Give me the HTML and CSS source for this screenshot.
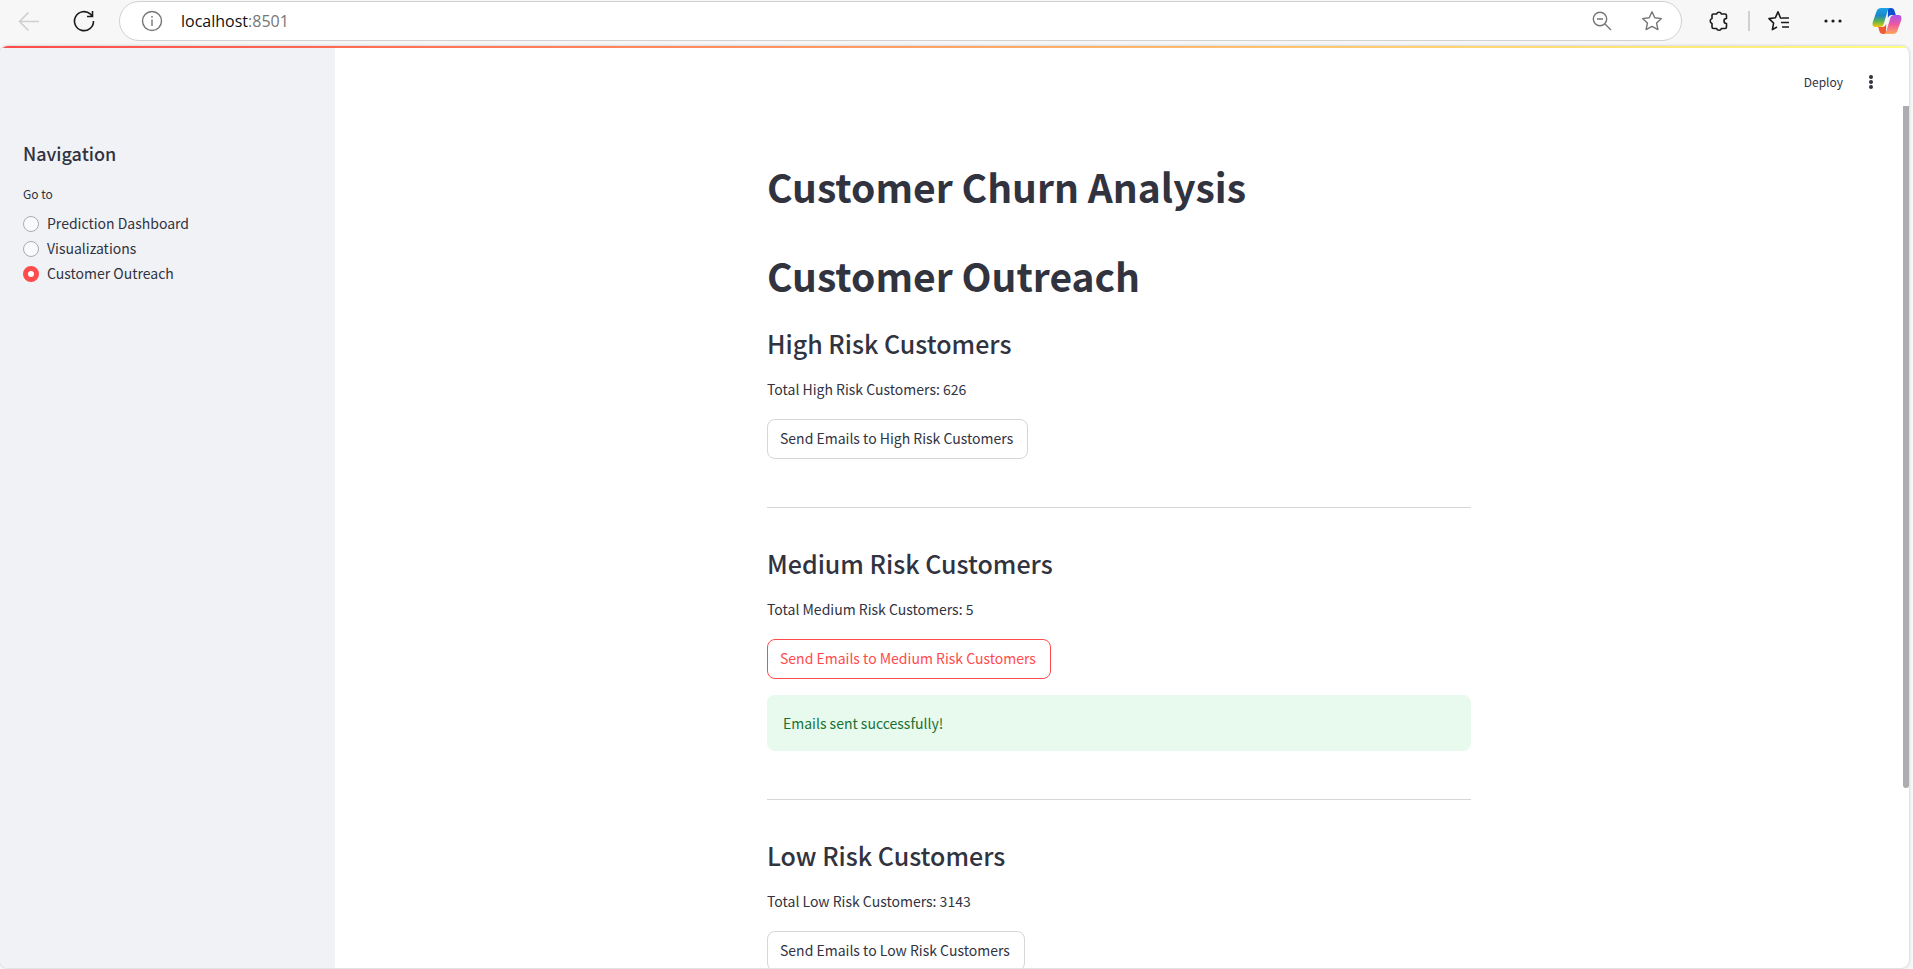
FILE: index.html
```html
<!DOCTYPE html>
<html lang="en">
<head>
<meta charset="utf-8">
<title>Customer Churn Analysis</title>
<link rel="stylesheet" href="styles.css">
</head>
<body>
<header class="toolbar">
  <button class="tool tool-back" aria-label="Back" disabled>
    <svg width="22" height="22" viewBox="0 0 22 22"><path d="M21 11.500H1.500M10.500 2.500l-9 9 9 9"/></svg>
  </button>
  <button class="tool tool-reload" aria-label="Refresh">
    <svg width="22" height="22" viewBox="0 0 22 22"><path d="M20.500 11A9.500 9.500 0 1 1 17.500 4.200L19.500 6.300M19.500 1v5.500H14"/></svg>
  </button>
  <div class="address">
    <button class="tool tool-muted" aria-label="Site information">
      <svg width="22" height="22" viewBox="0 0 22 22"><circle cx="11" cy="11" r="9.500"/><path d="M11 9.500V16M11 6v1.800"/></svg>
    </button>
    <div class="url"><span class="url-host">localhost</span>:8501</div>
    <button class="tool tool-muted" aria-label="Zoom out">
      <svg width="22" height="22" viewBox="0 0 22 22"><circle cx="9" cy="9" r="6.700"/><path d="M6 9h6M14 14l6 6"/></svg>
    </button>
    <button class="tool tool-muted" aria-label="Add to favorites">
      <svg width="22" height="22" viewBox="0 0 22 22"><path stroke-linejoin="round" d="M11 1.800l2.800 6 6.600.8-4.800 4.500 1.300 6.500L11 16.400l-5.900 3.200 1.300-6.500L1.600 8.600l6.600-.8z"/></svg>
    </button>
  </div>
  <div class="actions">
    <button class="tool" aria-label="Extensions">
      <svg width="22" height="22" viewBox="0 0 22 22"><path stroke-linejoin="round" d="M5.500 4H8.600a2.500 2.500 0 0 1 4.800 0H17a1.500 1.500 0 0 1 1.500 1.500V8.500a2.500 2.500 0 1 0 0 5V17a1.500 1.500 0 0 1-1.500 1.500H13.400a2.500 2.500 0 0 1-4.800 0H5.500A1.500 1.500 0 0 1 4 17V13.400a2.500 2.500 0 0 1 0-4.800V5.500A1.500 1.500 0 0 1 5.500 4z"/></svg>
    </button>
    <span class="divider"></span>
    <button class="tool" aria-label="Favorites">
      <svg width="22" height="22" viewBox="0 0 22 22"><path stroke-linejoin="round" d="M14 8.300l-1.500-.3L10 1.800 7.300 7.800l-6.300.8 4.600 4.500-1.200 6.500L9 17M14 8h7M13 12.500h8M14 17h7"/></svg>
    </button>
    <button class="tool" aria-label="Settings and more">
      <svg class="dots" width="22" height="22" viewBox="0 0 22 22"><circle cx="4" cy="11" r="1.600"/><circle cx="11" cy="11" r="1.600"/><circle cx="18" cy="11" r="1.600"/></svg>
    </button>
    <button class="tool" aria-label="Copilot">
      <svg class="copilot" width="30" height="28" viewBox="0 0 30 28">
        <defs>
          <linearGradient id="cool" x1="0" y1="0" x2="0" y2="1"><stop offset="0" stop-color="#1aa5e8"/><stop offset=".4" stop-color="#1d86c8"/><stop offset=".7" stop-color="#5fb548"/><stop offset="1" stop-color="#f3c80c"/></linearGradient>
          <linearGradient id="warm" x1="0" y1="0" x2="0" y2="1"><stop offset="0" stop-color="#a953ef"/><stop offset=".5" stop-color="#ee5a9d"/><stop offset="1" stop-color="#ffa95c"/></linearGradient>
        </defs>
        <path fill="#0e4fd0" d="M16 1h3c2 0 3 1 3.600 3l1.200 4h-4c-2 0-3 1-4 3z"/>
        <path fill="#f05a35" d="M14 27h-3c-2 0-3-1-3.600-3L6.200 20h4c2 0 3-1 4-3z"/>
        <path fill="url(#cool)" d="M9.500 1H19c-2 0-3 1.500-3.600 3.500L12 16c-.8 3-2 4-4.500 4H4c-3 0-4-2-3.200-5L4.300 5C5.200 2 6.500 1 9.500 1z"/>
        <path fill="url(#warm)" d="M20.500 27H11c2 0 3-1.500 3.600-3.500L18 12c.8-3 2-4 4.500-4H26c3 0 4 2 3.200 5l-3.500 10c-.9 3-2.200 4-5.200 4z"/>
      </svg>
    </button>
  </div>
</header>

<div class="page">
  <div class="decoration"></div>
  <aside class="sidebar">
    <h2 class="sidebar-title">Navigation</h2>
    <fieldset class="nav">
      <legend class="nav-legend">Go to</legend>
      <label class="nav-item"><input type="radio" name="page">Prediction Dashboard</label>
      <label class="nav-item"><input type="radio" name="page">Visualizations</label>
      <label class="nav-item"><input type="radio" name="page" checked>Customer Outreach</label>
    </fieldset>
  </aside>
  <main class="main">
    <div class="app-header">
      <button class="deploy">Deploy</button>
      <button class="menu" aria-label="Main menu">
        <svg width="4" height="16" viewBox="0 0 4 16"><circle cx="2" cy="3" r="2"/><circle cx="2" cy="8" r="2"/><circle cx="2" cy="13" r="2"/></svg>
      </button>
    </div>
    <div class="content">
      <h1 class="title">Customer Churn Analysis</h1>
      <h1 class="title">Customer Outreach</h1>
      <section class="group">
        <h3 class="group-title">High Risk Customers</h3>
        <p class="text">Total High Risk Customers: 626</p>
        <button class="send">Send Emails to High Risk Customers</button>
      </section>
      <hr class="rule">
      <section class="group">
        <h3 class="group-title">Medium Risk Customers</h3>
        <p class="text">Total Medium Risk Customers: 5</p>
        <button class="send send-active">Send Emails to Medium Risk Customers</button>
        <div class="alert" role="alert">Emails sent successfully!</div>
      </section>
      <hr class="rule">
      <section class="group">
        <h3 class="group-title">Low Risk Customers</h3>
        <p class="text">Total Low Risk Customers: 3143</p>
        <button class="send">Send Emails to Low Risk Customers</button>
      </section>
    </div>
  </main>
  <div class="scroll-thumb"></div>
</div>
</body>
</html>
```
FILE: styles.css
```css
* {
  box-sizing: border-box;
}

body {
  margin: 0;
  height: 100vh;
  display: flex;
  flex-direction: column;
  overflow: hidden;
  background: #f7f7f7;
  color: #31333f;
  font: 14px/26px "Noto Sans CJK SC", "Noto Sans", sans-serif;
}

button {
  font: inherit;
  color: inherit;
  background: none;
  border: 0;
  padding: 0;
}

h1, h2, h3, p {
  margin: 0;
}

/* Browser toolbar */
.toolbar {
  flex: none;
  display: flex;
  align-items: center;
  height: 46px;
  padding: 0 11px 4px 18px;
}

.tool {
  display: flex;
  color: #1b1b1b;
}

.tool svg {
  fill: none;
  stroke: currentColor;
  stroke-width: 1.6;
}

.tool-back {
  color: #cfcfcf;
}

.tool-reload {
  margin-left: 33px;
}

.tool-muted {
  color: #757575;
}

.tool-muted svg {
  stroke-width: 1.4;
}

.address {
  flex: 1;
  display: flex;
  align-items: center;
  gap: 28px;
  height: 40px;
  margin-left: 24px;
  padding: 0 18px 0 21px;
  border: 1px solid #d1d1d1;
  border-radius: 20px;
  background: #fff;
}

.url {
  flex: 1;
  margin-left: -10px;
  font-family: "Open Sans", "Noto Sans", sans-serif;
  font-size: 16px;
  color: #767676;
}

.url-host {
  color: #111;
}

.actions {
  display: flex;
  align-items: center;
  margin-left: 26px;
}

.divider {
  width: 2px;
  height: 20px;
  margin: 0 18px;
  background: #d0d0d0;
}

.actions .tool + .tool {
  margin-left: 32px;
}

.actions .tool:last-child {
  margin-left: 28px;
}

.tool .dots {
  fill: currentColor;
  stroke: none;
}

.tool .copilot {
  stroke: none;
}

/* Streamlit app */
.page {
  position: relative;
  flex: 1;
  display: flex;
  min-height: 0;
  margin: 0 4px 1px 0;
  overflow: hidden;
  border-radius: 8px;
  background: #fff;
  box-shadow: 0 0 3px #bbb;
}

.decoration {
  position: absolute;
  inset: 0 0 auto;
  height: 2px;
  background: linear-gradient(90deg, #ff4b4b, #fffd80);
}

.sidebar {
  flex: none;
  width: 335px;
  padding: 94px 23px;
  background: #f0f2f6;
}

.sidebar-title {
  font-size: 18px;
  line-height: 26px;
  font-weight: 500;
}

.nav {
  margin: 18px 0 0;
  padding: 0;
  border: 0;
}

.nav-legend {
  padding: 0;
  margin-bottom: 7px;
  font-size: 12px;
  line-height: 20px;
}

.nav-item {
  display: flex;
  align-items: center;
  gap: 8px;
  line-height: 25px;
}

.nav-item input {
  appearance: none;
  width: 16px;
  height: 16px;
  margin: 0;
  border: 1px solid #a9abb3;
  border-radius: 50%;
  background: #f9fafc;
}

.nav-item input:checked {
  border: 5px solid #ff4b4b;
  background: #fff;
}

.main {
  flex: 1;
  min-width: 0;
  padding-right: 6px;
}

.app-header {
  display: flex;
  align-items: center;
  justify-content: flex-end;
  gap: 26px;
  height: 72px;
  padding-right: 30px;
}

.deploy {
  font-size: 12px;
}

.menu {
  display: flex;
  fill: #31333f;
}

.content {
  max-width: 704px;
  margin: 0 auto;
  padding-top: 42px;
}

.title {
  margin-bottom: 36px;
  font-size: 39px;
  line-height: 53px;
  font-weight: 700;
}

.title + .group {
  margin-top: -12px;
}

.group {
  display: flex;
  flex-direction: column;
  align-items: flex-start;
  gap: 16px;
}

.group-title {
  font-size: 25px;
  line-height: 35px;
  font-weight: 500;
}

.text {
  padding-bottom: 2px;
  line-height: 24px;
}

.send {
  height: 40px;
  padding: 0 14px 2px 12px;
  border: 1px solid #d6d6d9;
  border-radius: 8px;
  background: #fff;
}

.send-active {
  border-color: #ff4b4b;
  color: #ff4b4b;
}

.alert {
  align-self: stretch;
  padding: 15px 16px;
  border-radius: 8px;
  background: #e8f9ee;
  color: #177233;
}

.rule {
  height: 1px;
  margin: 48px 0 38px;
  border: 0;
  background: #d6d6d9;
}

.scroll-thumb {
  position: absolute;
  top: 60px;
  right: 0;
  width: 6px;
  height: 74%;
  border-radius: 0 0 3px 3px;
  background: #acacb1;
}
```
